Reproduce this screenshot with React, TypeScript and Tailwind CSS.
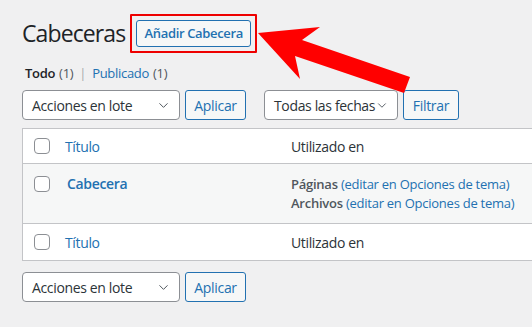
import { ChevronDown } from "lucide-react";

function Select({ label, width }: { label: string; width: string }) {
  return (
    <div
      className={`flex h-[30px] items-center justify-between whitespace-nowrap rounded-[4px] border border-[#8c8f94] bg-white pl-[9px] pr-[8px] text-[14px] tracking-[-0.35px] text-[#2c3338] ${width}`}
    >
      <span>{label}</span>
      <ChevronDown size={15} strokeWidth={1.6} className="text-[#50575e]" />
    </div>
  );
}

function Button({ label, width }: { label: string; width: string }) {
  return (
    <div
      className={`flex h-[30px] items-center justify-center rounded-[3px] border border-[#2271b1] bg-[#f6f7f7] text-[14px] tracking-[-0.3px] text-[#2271b1] ${width}`}
    >
      {label}
    </div>
  );
}

function Checkbox() {
  return <span className="block h-[16px] w-[16px] rounded-[4px] border border-[#8c8f94] bg-white" />;
}

function Tablenav() {
  return (
    <div className="flex items-center">
      <Select label="Acciones en lote" width="w-[158px]" />
      <div className="ml-[5px]">
        <Button label="Aplicar" width="w-[61px]" />
      </div>
    </div>
  );
}

export default function App() {
  return (
    <div className="relative h-[327px] w-[532px] overflow-hidden bg-[#f0f0f1] font-['Open_Sans',sans-serif] text-[#3c434a]">
      <div className="pl-[22px] pt-[14px]">
        {/* title + add new */}
        <div className="flex h-[39px] items-center">
          <h1 className="text-[23px] font-normal leading-none tracking-[-0.9px] text-[#1d2327]">Cabeceras</h1>
          <div className="ml-[5px] rounded-[1px] border-2 border-[#ee0000] p-[4px]">
            <div className="flex h-[27px] w-[115px] items-center justify-center whitespace-nowrap rounded-[3px] border border-[#2271b1] bg-[#f6f7f7] text-[13px] font-semibold tracking-[-0.35px] text-[#2271b1]">
              Añadir Cabecera
            </div>
          </div>
        </div>

        {/* views */}
        <div className="mt-[11px] flex h-[18px] items-center pl-[3px] text-[13px] leading-[18px] tracking-[-0.3px]">
          <span className="font-semibold text-[#1d2327]">Todo</span>
          <span className="ml-[4px] text-[#50575e]">(1)</span>
          <span className="mx-[6px] text-[#a7aaad]">|</span>
          <span className="text-[#2271b1]">Publicado</span>
          <span className="ml-[4px] text-[#50575e]">(1)</span>
        </div>

        {/* filters */}
        <div className="mt-[8px] flex items-center">
          <Tablenav />
          <div className="ml-[18px] flex items-center">
            <Select label="Todas las fechas" width="w-[134px]" />
            <div className="ml-[5px]">
              <Button label="Filtrar" width="w-[56px]" />
            </div>
          </div>
        </div>

        {/* list table */}
        <div className="mt-[8px] w-[560px] border border-[#c3c4c7] text-[14px] tracking-[-0.35px]">
          <div className="flex h-[35px] items-center border-b border-[#c3c4c7] bg-white">
            <div className="w-[42px] pl-[11px]">
              <Checkbox />
            </div>
            <div className="w-[226px] text-[#2271b1]">Título</div>
            <div className="text-[#2c3338]">Utilizado en</div>
          </div>
          <div className="flex h-[60px] items-start border-b border-[#c3c4c7] bg-[#f6f7f7] pt-[12px]">
            <div className="w-[42px] pl-[11px]">
              <Checkbox />
            </div>
            <div className="w-[226px] pl-[2px] text-[14px] font-semibold leading-[16px] text-[#2271b1]">Cabecera</div>
            <div className="text-[13px] leading-[19px] tracking-[-0.25px] text-[#50575e]">
              <div className="-mt-[1px]">
                <span className="font-semibold">Páginas</span>{" "}
                <span className="text-[#2271b1]">(editar en Opciones de tema)</span>
              </div>
              <div>
                <span className="font-semibold">Archivos</span>{" "}
                <span className="text-[#2271b1]">(editar en Opciones de tema)</span>
              </div>
            </div>
          </div>
          <div className="flex h-[36px] items-center bg-white">
            <div className="w-[42px] pl-[11px]">
              <Checkbox />
            </div>
            <div className="w-[226px] text-[#2271b1]">Título</div>
            <div className="text-[#2c3338]">Utilizado en</div>
          </div>
        </div>

        {/* bottom bulk actions */}
        <div className="mt-[11px]">
          <Tablenav />
        </div>
      </div>

      {/* annotation arrow */}
      <svg className="absolute left-0 top-0" width="532" height="327" viewBox="0 0 532 327">
        <polygon
          points="258,33 320,27 302,40 410,77 404,93 295,56 300,79"
          fill="#ff0000"
        />
      </svg>
    </div>
  );
}
